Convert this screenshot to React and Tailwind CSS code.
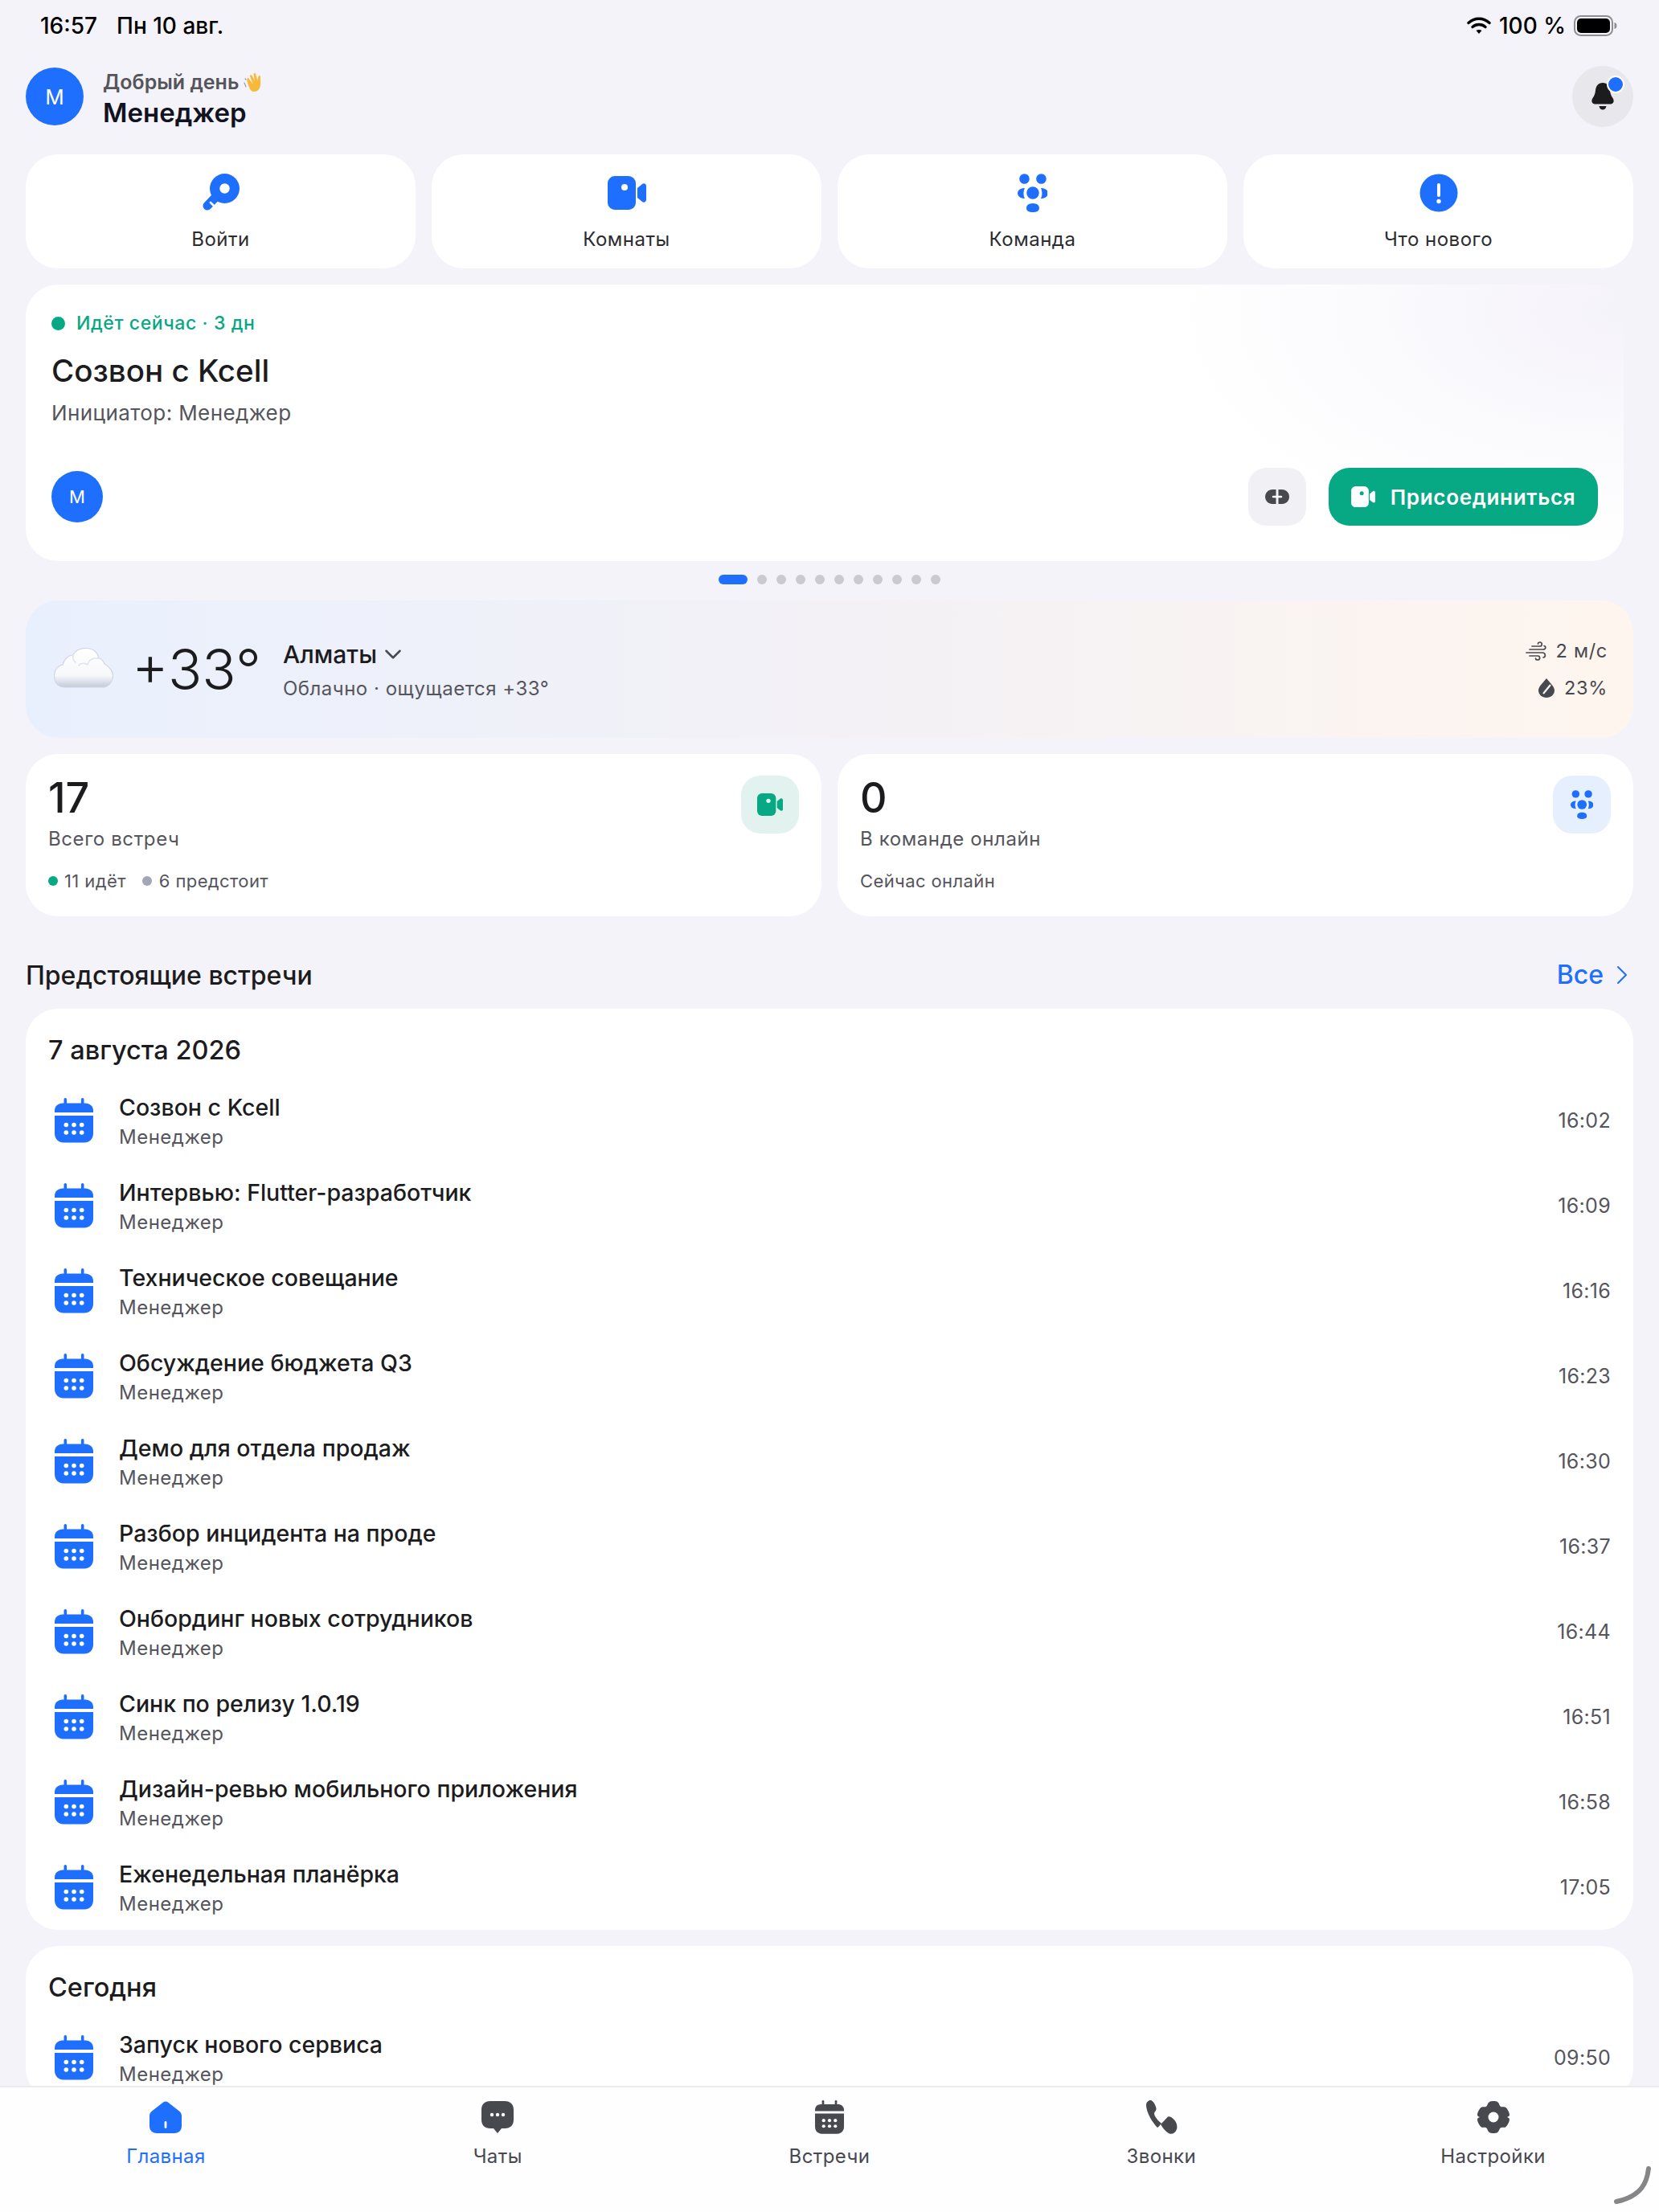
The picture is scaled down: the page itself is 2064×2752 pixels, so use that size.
import { ChevronDown, ChevronRight } from "lucide-react";

const BLUE = "#1f6fff";
const GRAY = "#48484f";

const KeyIcon = () => (
  <svg width="48" height="48" viewBox="0 0 48 48">
    <path d="M28 18 L7 40" stroke={BLUE} strokeWidth="11" strokeLinecap="round" />
    <circle cx="28.5" cy="18.5" r="18.5" fill={BLUE} />
    <circle cx="28.5" cy="18.5" r="6.2" fill="#fff" />
    <path d="M11 36 L15.5 40.5" stroke="#fff" strokeWidth="2.6" strokeLinecap="round" />
  </svg>
);

const VideoIcon = ({ color = BLUE, hole = "#fff", size = 48 }) => (
  <svg width={size} height={size * 0.875} viewBox="0 0 48 42">
    <rect x="0" y="0" width="35" height="42" rx="9" fill={color} />
    <path d="M37 15 L43 10 C45 8.5 48 9.5 48 12.5 L48 29.5 C48 32.5 45 33.5 43 32 L37 27 Z" fill={color} />
    <circle cx="21" cy="14" r="4" fill={hole} />
  </svg>
);

const TeamIcon = ({ color = BLUE, size = 48 }) => (
  <svg width={size * 0.79} height={size} viewBox="0 0 38 48">
    <circle cx="8.5" cy="6.5" r="6.3" fill={color} />
    <circle cx="29.5" cy="6.5" r="6.3" fill={color} />
    <circle cx="19" cy="24" r="7.8" fill={color} />
    <path d="M9 18 C3 18 0 21 0 24.5 C0 28 3 31 9 31 C7 27 7 22 9 18 Z" fill={color} />
    <path d="M29 18 C35 18 38 21 38 24.5 C38 28 35 31 29 31 C31 27 31 22 29 18 Z" fill={color} />
    <path d="M11 43 C11 39 14 37 19 37 C24 37 27 39 27 43 C27 47 23 48 19 48 C15 48 11 47 11 43 Z" fill={color} />
  </svg>
);

const InfoIcon = () => (
  <svg width="48" height="48" viewBox="0 0 48 48">
    <circle cx="24" cy="24" r="23.5" fill={BLUE} />
    <rect x="22" y="12" width="4" height="17" rx="2" fill="#fff" />
    <circle cx="24" cy="34.5" r="2.7" fill="#fff" />
  </svg>
);

const CalendarIcon = ({ color = BLUE, w = 48, h = 56 }) => (
  <svg width={w} height={h} viewBox="0 0 48 56">
    <rect x="11.5" y="0" width="3.6" height="10" rx="1.8" fill={color} />
    <rect x="32.9" y="0" width="3.6" height="10" rx="1.8" fill={color} />
    <path d="M0 18 L0 16 C0 10 4.5 6.5 10 6.5 L38 6.5 C43.5 6.5 48 10 48 16 L48 18 Z" fill={color} />
    <path d="M0 22 L48 22 L48 44 C48 51 43 55.5 37 55.5 L11 55.5 C5 55.5 0 51 0 44 Z" fill={color} />
    {[14.3, 24, 33.7].map((x) =>
      [33.5, 43].map((y) => <circle key={`${x}-${y}`} cx={x} cy={y} r="2.8" fill="#fff" />)
    )}
  </svg>
);

const HomeIcon = () => (
  <svg width="40" height="40" viewBox="0 0 40 40">
    <path d="M17 1.5 C18.8 0 21.2 0 23 1.5 L37 12.5 C39 14 40 16 40 18.5 L40 31 C40 36.5 36.5 40 31 40 L9 40 C3.5 40 0 36.5 0 31 L0 18.5 C0 16 1 14 3 12.5 Z" fill={BLUE} />
    <rect x="18.6" y="25" width="2.8" height="9" rx="1.4" fill="#fff" />
  </svg>
);

const ChatIcon = () => (
  <svg width="40" height="40" viewBox="0 0 40 40">
    <path d="M11 0 L29 0 C36 0 40 4 40 11 L40 23 C40 30 36 34 29 34 L25 34 L20 40 L15 34 L11 34 C4 34 0 30 0 23 L0 11 C0 4 4 0 11 0 Z" fill={GRAY} />
    {[13, 20, 27].map((x) => <circle key={x} cx={x} cy="17" r="2.2" fill="#fff" />)}
  </svg>
);

const PhoneIcon = () => (
  <svg width="40" height="42" viewBox="0 0 40 42">
    <path d="M1 6 C1 2 5 -1 8 0.5 C10.5 2 13 7 13.5 10 C14 13 11 14 11 16.5 C11 20 17 27 20 28.5 C18 31 17 33 15 34 C9 28 1 15 1 6 Z" fill={GRAY} />
    <path d="M19 30 L28 20.5 C30 19.5 33 21 36 24.5 C39 28 40 32 39 36 C37.5 40.5 33.5 42.5 30 41.5 C26 40 22 35 19 30 Z" fill={GRAY} />
  </svg>
);

const GearIcon = () => (
  <svg width="40" height="40" viewBox="0 0 40 40">
    <path d="M15 1 C17 -0.3 23 -0.3 25 1 C27.5 2.5 27 5.5 29 6.7 C31 7.9 33.5 6.3 35.5 8 C37.5 9.7 40 14.5 40 17 C40 19.5 37 19.7 37 20 C37 20.3 40 20.5 40 23 C40 25.5 37.5 30.3 35.5 32 C33.5 33.7 31 32.1 29 33.3 C27 34.5 27.5 37.5 25 39 C23 40.3 17 40.3 15 39 C12.5 37.5 13 34.5 11 33.3 C9 32.1 6.5 33.7 4.5 32 C2.5 30.3 0 25.5 0 23 C0 20.5 3 20.3 3 20 C3 19.7 0 19.5 0 17 C0 14.5 2.5 9.7 4.5 8 C6.5 6.3 9 7.9 11 6.7 C13 5.5 12.5 2.5 15 1 Z" fill={GRAY} />
    <circle cx="20" cy="20" r="6.5" fill="#fff" />
  </svg>
);

const WifiIcon = () => (
  <svg width="30" height="22" viewBox="0 0 30 22" fill="none" stroke="#000" strokeWidth="3.4" strokeLinecap="round">
    <path d="M2 7.5 C9.5 0.5 20.5 0.5 28 7.5" />
    <path d="M7 12.5 C11.5 8.5 18.5 8.5 23 12.5" />
    <path d="M15 21 L11.5 17 C13.5 15.5 16.5 15.5 18.5 17 Z" fill="#000" stroke="none" />
  </svg>
);

const BatteryIcon = () => (
  <svg width="54" height="26" viewBox="0 0 54 26">
    <rect x="1" y="1" width="47" height="24" rx="7.5" fill="none" stroke="#8e8e93" strokeWidth="2" />
    <rect x="4" y="4" width="41" height="18" rx="5" fill="#000" />
    <path d="M50.5 9 C52.5 9.5 53.5 11 53.5 13 C53.5 15 52.5 16.5 50.5 17 Z" fill="#8e8e93" />
  </svg>
);

const BellIcon = () => (
  <svg width="28" height="34" viewBox="0 0 28 34">
    <path d="M14 0 C19.5 0 22.5 4 23 9.5 C23.5 14 24.5 16 26.5 19 C28.5 22 28 26 24 26.5 L4 26.5 C0 26 -0.5 22 1.5 19 C3.5 16 4.5 14 5 9.5 C5.5 4 8.5 0 14 0 Z" fill="#1c1c1e" />
    <path d="M9.5 29 L18.5 29 C18 32 16 33.5 14 33.5 C12 33.5 10 32 9.5 29 Z" fill="#1c1c1e" />
  </svg>
);

const LinkIcon = () => (
  <svg width="30" height="18" viewBox="0 0 30 18">
    <path d="M13.5 0 L9 0 C4 0 0 4 0 9 C0 14 4 18 9 18 L13.5 18 Z" fill={GRAY} />
    <path d="M16.5 0 L21 0 C26 0 30 4 30 9 C30 14 26 18 21 18 L16.5 18 Z" fill={GRAY} />
    <path d="M10 9 L20 9" stroke="#fff" strokeWidth="2.6" strokeLinecap="round" />
  </svg>
);

const WindIcon = () => (
  <svg width="26" height="24" viewBox="0 0 26 24" fill="none" stroke={GRAY} strokeWidth="1.7" strokeLinecap="round">
    <path d="M8 6 L18 6 C21 6 21 1 18 1 C16.5 1 15.5 2 15.5 3" />
    <path d="M5 10 L22 10 C25.5 10 25.5 6 23 5.5" />
    <path d="M1 14 L21 14 C25 14 25.5 19.5 22 20" />
    <path d="M5 18 L15 18 C18.5 18 18.5 23 15 23 C13.5 23 12.5 22 12.5 21" />
  </svg>
);

const DropIcon = () => (
  <svg width="20" height="24" viewBox="0 0 20 24">
    <path d="M10 0 C13 4 20 10 20 15 C20 20 15.5 24 10 24 C4.5 24 0 20 0 15 C0 10 7 4 10 0 Z" fill={GRAY} />
    <path d="M6 19 L15 8" stroke="#f8f4f2" strokeWidth="2.2" />
  </svg>
);

const CloudIcon = () => (
  <svg width="74" height="50" viewBox="0 0 74 50">
    <defs>
      <linearGradient id="cloud" x1="0" y1="0" x2="0" y2="1">
        <stop offset="0" stopColor="#ffffff" />
        <stop offset="0.7" stopColor="#f7f8fb" />
        <stop offset="1" stopColor="#c3cad8" />
      </linearGradient>
    </defs>
    <path d="M14 49 C4 49 0.5 42 0.5 35 C0.5 27 5 22 11 21 C13 13 19 9 24 9 C27 3 33 0.5 40 0.5 C48 0.5 54 5 56 13 C60 14 62 17 63 20 C69 23 73.5 29 73.5 35 C73.5 43 67 49 60 49 Z" fill="url(#cloud)" stroke="#cfd6e4" strokeWidth="1.2" />
    <path d="M24 9 C23 13 24 16 27 18 M56 13 C49 12 43 15 42 21 M42 21 C38 18 33 19 31 22" fill="none" stroke="#dfe3ec" strokeWidth="1.6" strokeLinecap="round" />
  </svg>
);

const HandIcon = () => (
  <svg width="24" height="24" viewBox="0 0 24 24">
    <path d="M6 7 L12 15 L8 5 C7.5 3.5 9.5 2.5 10.5 4 L14 11 L12.5 2.5 C12.3 1 14.3 0.5 15 2 L17.5 10 L18.5 5 C19 3.5 21 4 21 5.5 L21 15 C21 20 17.5 24 13.5 24 C10 24 8.5 22 7 19 L4.5 11 C4 9.5 5 6 6 7 Z" fill="#f8b93a" />
    <path d="M1 13 L3 18 M3 9 L2 8" stroke="#9a9aa2" strokeWidth="1.2" strokeLinecap="round" />
  </svg>
);

const quickActions = [
  { label: "Войти", icon: <KeyIcon /> },
  { label: "Комнаты", icon: <VideoIcon /> },
  { label: "Команда", icon: <TeamIcon /> },
  { label: "Что нового", icon: <InfoIcon /> },
];

const meetings = [
  { title: "Созвон с Kcell", time: "16:02" },
  { title: "Интервью: Flutter-разработчик", time: "16:09" },
  { title: "Техническое совещание", time: "16:16" },
  { title: "Обсуждение бюджета Q3", time: "16:23" },
  { title: "Демо для отдела продаж", time: "16:30" },
  { title: "Разбор инцидента на проде", time: "16:37" },
  { title: "Онбординг новых сотрудников", time: "16:44" },
  { title: "Синк по релизу 1.0.19", time: "16:51" },
  { title: "Дизайн-ревью мобильного приложения", time: "16:58" },
  { title: "Еженедельная планёрка", time: "17:05" },
];

const tabs = [
  { label: "Главная", icon: <HomeIcon />, active: true },
  { label: "Чаты", icon: <ChatIcon /> },
  { label: "Встречи", icon: <CalendarIcon color={GRAY} w={36} h={42} /> },
  { label: "Звонки", icon: <PhoneIcon /> },
  { label: "Настройки", icon: <GearIcon /> },
];

const MeetingRow = ({ title, time }) => (
  <div className="flex h-[106px] items-center pl-2">
    <CalendarIcon />
    <div className="ml-8 flex-1 pt-[4px]">
      <div className="text-[28.5px] leading-[38px] font-medium text-[#1c1c1e]">{title}</div>
      <div className="text-[24px] leading-[36px] tracking-[0.5px] text-[#55555c]">Менеджер</div>
    </div>
    <div className="pt-[2px] text-[25px] tracking-[0.3px] text-[#55555c]">{time}</div>
  </div>
);

export default function App() {
  return (
    <div className="relative flex h-[2752px] w-[2064px] flex-col overflow-hidden bg-[#f5f3fa] font-[Inter,sans-serif]">
      {/* статус-бар */}
      <div className="flex h-[64px] shrink-0 items-center justify-between pr-[52px] pl-[50px] text-[28px] font-medium text-black">
        <div className="flex gap-6">
          <span>16:57</span>
          <span>Пн 10 авг.</span>
        </div>
        <div className="flex items-center">
          <WifiIcon />
          <span className="ml-2.5">100 %</span>
          <div className="ml-2.5 flex"><BatteryIcon /></div>
        </div>
      </div>

      <div className="flex-1 overflow-hidden px-8">
        {/* шапка */}
        <div className="mb-4 flex h-[112px] items-center justify-between">
          <div className="flex items-center gap-6">
            <div className="flex h-[72px] w-[72px] items-center justify-center rounded-full bg-[#1f6fff] text-[26px] text-white">М</div>
            <div className="pt-[6px]">
              <div className="flex items-center gap-1.5 text-[25px] leading-[34px] font-semibold text-[#55555c]">
                Добрый день <HandIcon />
              </div>
              <div className="text-[33px] leading-[42px] font-semibold text-[#111322]">Менеджер</div>
            </div>
          </div>
          <div className="relative flex h-[76px] w-[76px] items-center justify-center rounded-full bg-[#e8e7ec]">
            <BellIcon />
            <span className="absolute top-[12px] right-[11px] h-[22px] w-[22px] rounded-full border-2 border-white bg-[#1f6fff]" />
          </div>
        </div>

        {/* быстрые действия */}
        <div className="grid grid-cols-4 gap-5">
          {quickActions.map((item) => (
            <div key={item.label} className="flex h-[142px] flex-col items-center rounded-[40px] bg-white pt-6">
              <div className="flex h-[48px] items-center">{item.icon}</div>
              <div className="mt-[17px] text-[24px] leading-[34px] tracking-[0.5px] text-[#2c2c30]">{item.label}</div>
            </div>
          ))}
        </div>

        {/* текущая встреча */}
        <div className="mt-5 flex h-[344px] w-[1988px] flex-col rounded-[40px] bg-[radial-gradient(ellipse_28%_85%_at_100%_10%,#f5f3fa_0%,#ffffff_100%)] px-8">
          <div className="mt-[34px] flex h-[28px] items-center gap-[14px] text-[23px] font-medium tracking-[0.6px] text-[#07a884]">
            <span className="h-[17px] w-[17px] rounded-full bg-[#07a884]" />
            Идёт сейчас · 3 дн
          </div>
          <div className="mt-[20px] text-[38.5px] leading-[50px] font-medium text-[#1c1c1e]">Созвон с Kcell</div>
          <div className="mt-[10px] text-[26px] leading-[36px] tracking-[0.4px] text-[#55555c]">Инициатор: Менеджер</div>
          <div className="mt-[50px] flex items-center justify-between">
            <div className="flex h-[64px] w-[64px] items-center justify-center rounded-full bg-[#1f6fff] text-[22px] text-white">М</div>
            <div className="flex items-center gap-7">
              <div className="flex h-[72px] w-[72px] items-center justify-center rounded-[22px] bg-[#f1f0f4]">
                <LinkIcon />
              </div>
              <div className="flex h-[72px] w-[335px] items-center justify-center gap-[19px] rounded-[26px] bg-[#07a884] text-[26px] font-semibold tracking-[0.7px] text-white">
                <VideoIcon color="#fff" hole="#07a884" size={30} />
                Присоединиться
              </div>
            </div>
          </div>
        </div>

        {/* точки карусели */}
        <div className="flex h-[49px] items-center justify-center gap-3 pb-[4px]">
          <span className="h-[12px] w-[36px] rounded-full bg-[#1f6fff]" />
          {[...Array(10).keys()].map((i) => (
            <span key={i} className="h-[12px] w-[12px] rounded-full bg-[#cbc9d2]" />
          ))}
        </div>

        {/* погода */}
        <div className="flex h-[171px] items-center justify-between rounded-[40px] bg-gradient-to-r from-[#e9f0fd] via-[#f3f1f6] to-[#fef5ee] pr-8 pl-[35px]">
          <div className="flex items-center">
            <div className="flex pb-[3px]"><CloudIcon /></div>
            <div className="ml-[23px] text-[70px] leading-none font-light text-[#1c1c1e]">+33°</div>
            <div className="ml-[27px]">
              <div className="flex items-center gap-[3px] text-[30px] leading-[44px] font-medium text-[#1c1c1e]">
                Алматы <ChevronDown size={34} strokeWidth={1.8} color={GRAY} />
              </div>
              <div className="mt-[4px] text-[24px] leading-[34px] tracking-[0.5px] text-[#55555c]">Облачно · ощущается +33°</div>
            </div>
          </div>
          <div className="flex flex-col items-end gap-[14px] text-[23.5px] leading-[32px] tracking-[0.7px] text-[#48484f]">
            <div className="flex items-center gap-3"><WindIcon /> 2 м/с</div>
            <div className="flex items-center gap-3"><DropIcon /> 23%</div>
          </div>
        </div>

        {/* статистика */}
        <div className="mt-5 grid grid-cols-2 gap-5">
          <div className="flex h-[202px] justify-between rounded-[40px] bg-white pt-[27px] pr-7 pl-7">
            <div>
              <div className="pt-[2px] text-[52px] leading-[52px] font-medium text-[#1c1c1e]">17</div>
              <div className="mt-[8px] text-[24px] leading-[34px] tracking-[0.6px] text-[#55555c]">Всего встреч</div>
              <div className="mt-[19px] flex items-center text-[22px] leading-[32px] tracking-[0.4px] text-[#55555c]">
                <span className="h-[12px] w-[12px] rounded-full bg-[#07a884]" />
                <span className="ml-2">11 идёт</span>
                <span className="ml-5 h-[12px] w-[12px] rounded-full bg-[#a3a6b5]" />
                <span className="ml-[9px]">6 предстоит</span>
              </div>
            </div>
            <div className="flex h-[72px] w-[72px] items-center justify-center rounded-[24px] bg-[#e2f3ef]">
              <VideoIcon color="#07a884" hole="#e2f3ef" size={32} />
            </div>
          </div>
          <div className="flex h-[202px] justify-between rounded-[40px] bg-white pt-[27px] pr-7 pl-7">
            <div>
              <div className="pt-[2px] text-[52px] leading-[52px] font-medium text-[#1c1c1e]">0</div>
              <div className="mt-[8px] text-[24px] leading-[34px] tracking-[0.6px] text-[#55555c]">В команде онлайн</div>
              <div className="mt-[19px] text-[22px] leading-[32px] tracking-[0.4px] text-[#55555c]">Сейчас онлайн</div>
            </div>
            <div className="flex h-[72px] w-[72px] items-center justify-center rounded-[24px] bg-[#e6effe]">
              <TeamIcon size={36} />
            </div>
          </div>
        </div>

        {/* предстоящие встречи */}
        <div className="flex h-[115px] items-center justify-between pt-[32px]">
          <div className="text-[32px] font-medium text-[#1c1c1e]">Предстоящие встречи</div>
          <div className="-mr-[6px] flex items-center gap-[3px] pb-[2px] text-[32px] font-medium text-[#1f6fff]">
            Все <ChevronRight size={40} strokeWidth={1.2} />
          </div>
        </div>

        <div className="rounded-[40px] bg-white px-7">
          <div className="flex h-[86px] items-end pb-[9px] text-[32.5px] font-medium text-[#1c1c1e]">7 августа 2026</div>
          {meetings.map((m) => (
            <MeetingRow key={m.time} title={m.title} time={m.time} />
          ))}
        </div>

        <div className="mt-5 rounded-[40px] bg-white px-7">
          <div className="flex h-[86px] items-end pb-[9px] text-[32.5px] font-medium text-[#1c1c1e]">Сегодня</div>
          <MeetingRow title="Запуск нового сервиса" time="09:50" />
        </div>
      </div>

      {/* нижняя навигация */}
      <div className="grid h-[157px] shrink-0 grid-cols-5 border-t-2 border-[#ecebf0] bg-[#fefdff] pt-[16px]">
        {tabs.map((tab) => (
          <div key={tab.label} className="flex flex-col items-center">
            <div className="flex h-[42px] items-center">{tab.icon}</div>
            <div className={`mt-[11px] text-[24px] leading-[34px] tracking-[0.4px] ${tab.active ? "text-[#1f6fff]" : "text-[#48484f]"}`}>
              {tab.label}
            </div>
          </div>
        ))}
      </div>

      {/* след карандаша в углу */}
      <svg className="absolute right-[10px] bottom-[9px]" width="48" height="48" viewBox="0 0 48 48" fill="none">
        <path d="M45 3 C43 20 37 37 5 44" stroke="#85858a" strokeWidth="6" strokeLinecap="round" />
      </svg>
    </div>
  );
}
